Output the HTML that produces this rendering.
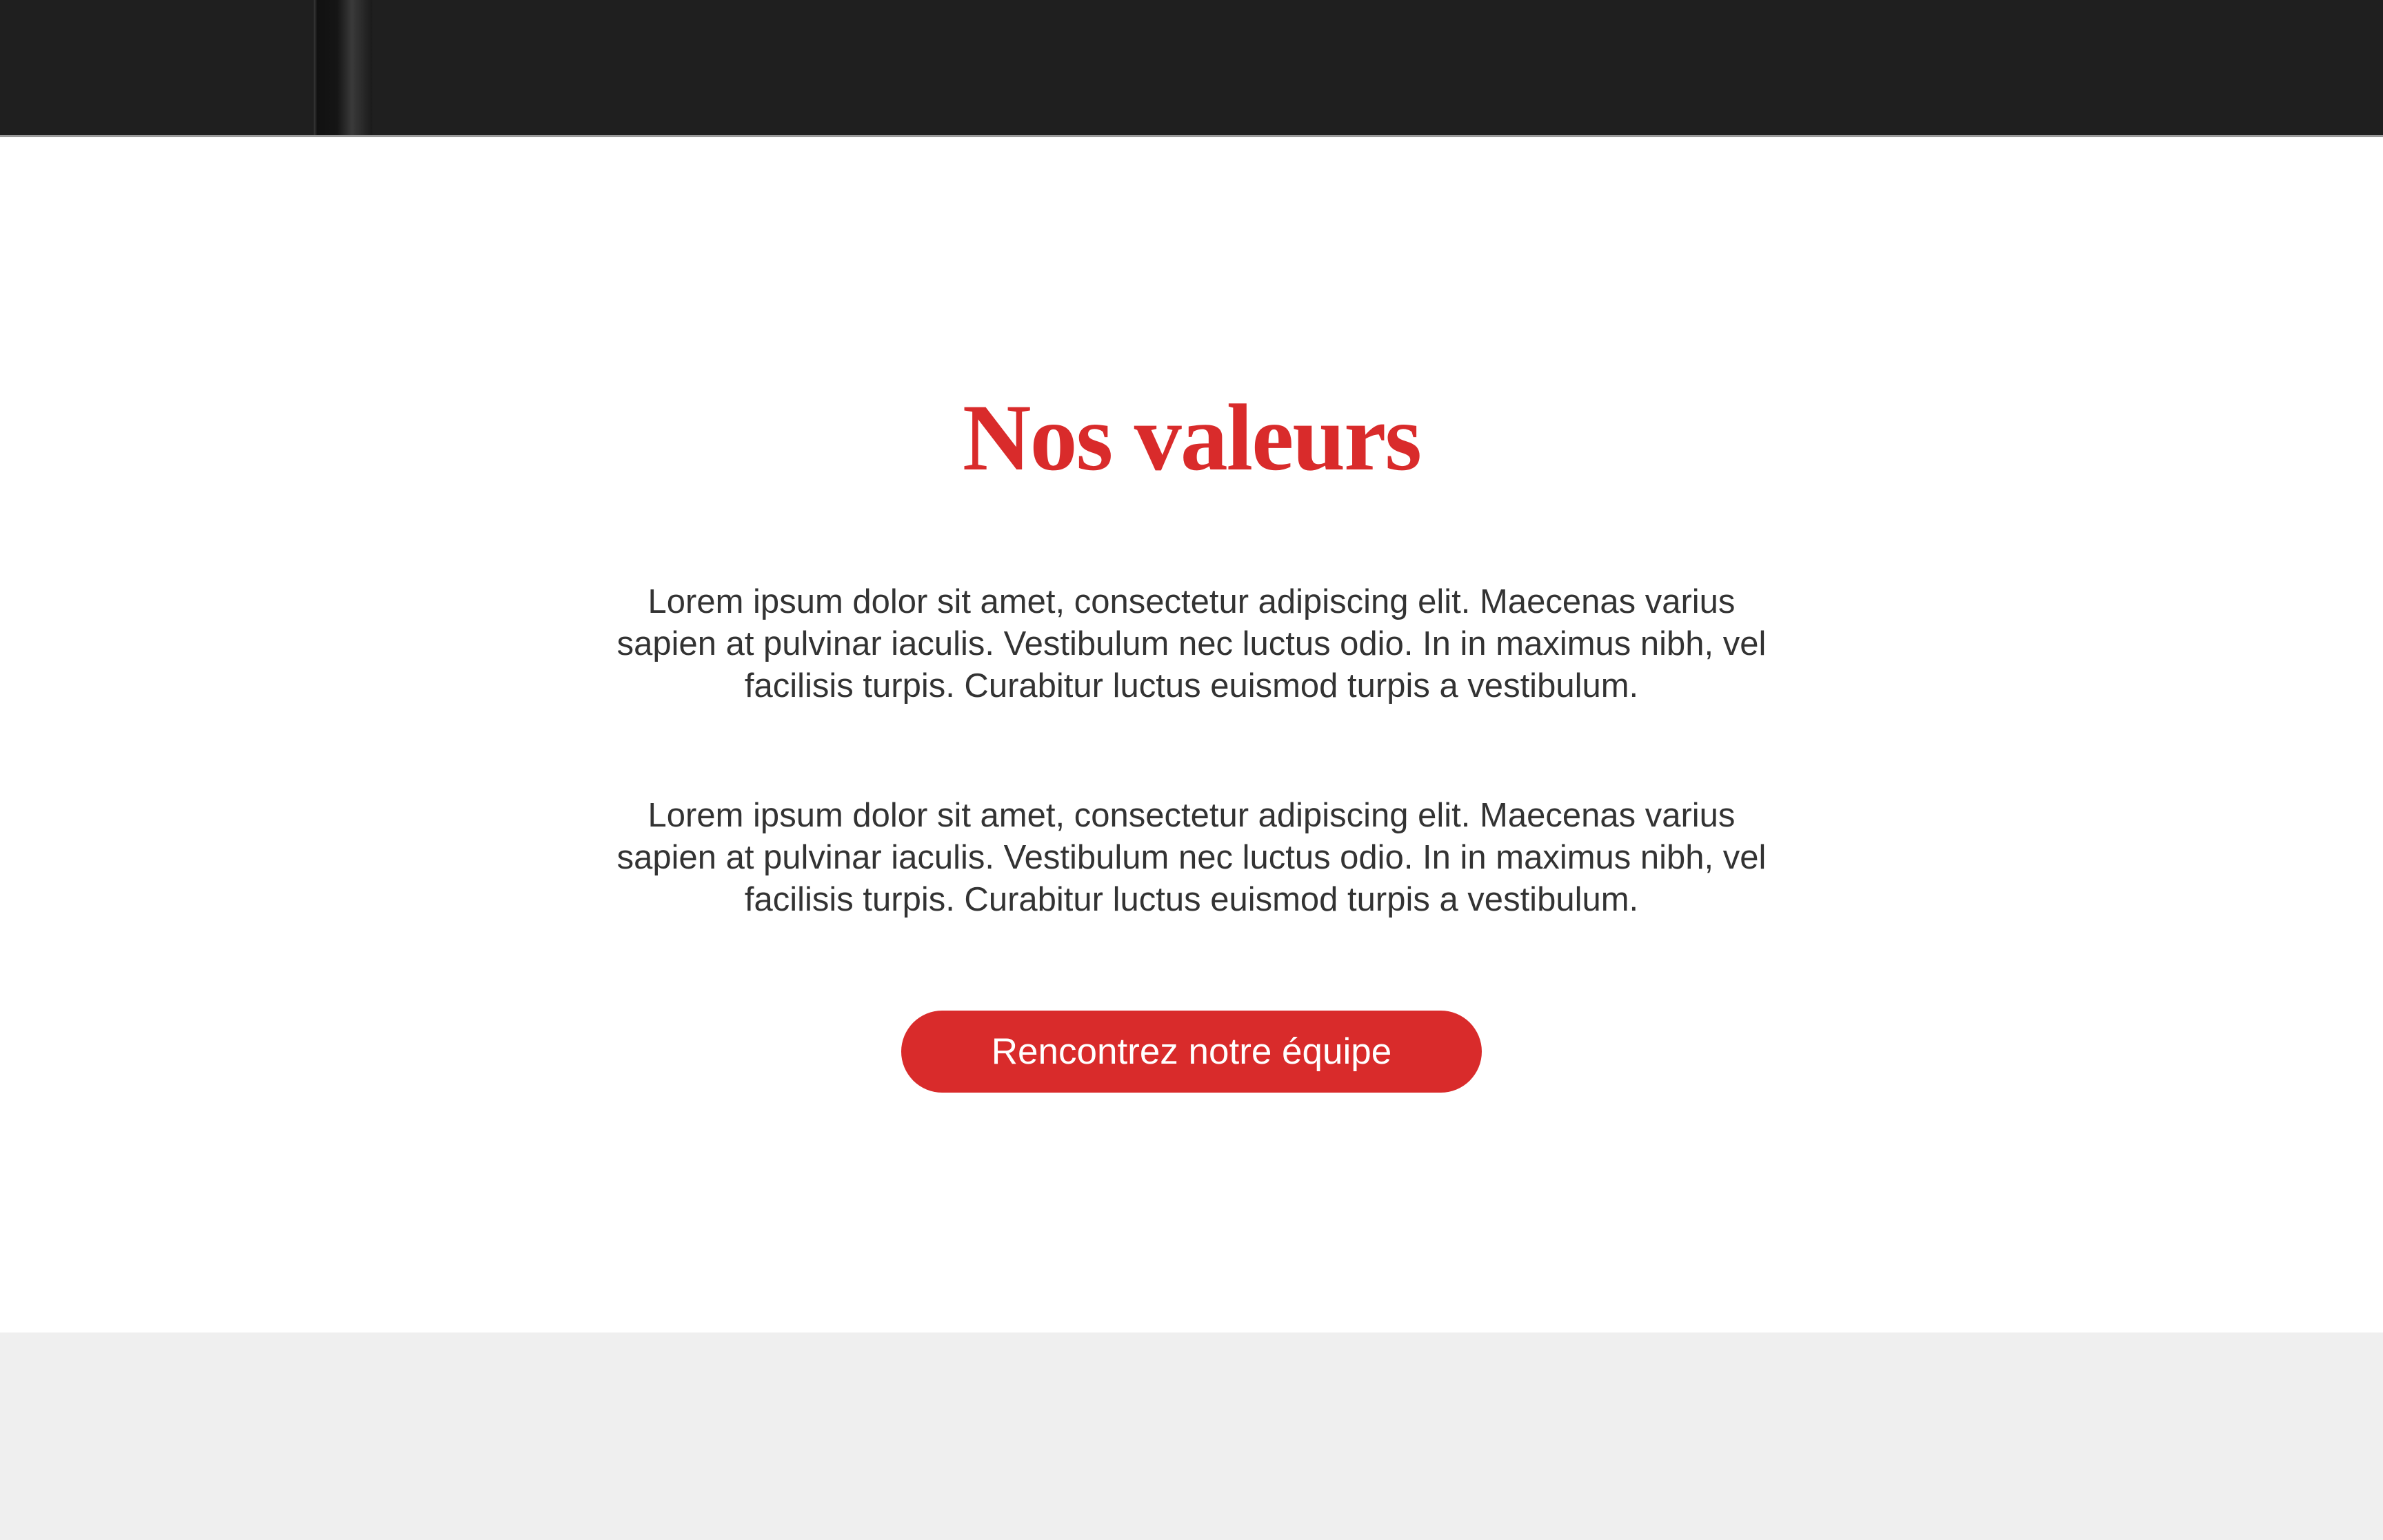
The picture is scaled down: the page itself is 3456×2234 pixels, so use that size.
<!DOCTYPE html>
<html><head><meta charset="utf-8"><style>
html,body{margin:0;padding:0;width:3456px;height:2234px;overflow:hidden;background:#fff;}
.top{position:absolute;left:0;top:0;width:3456px;height:198px;background:#1f1f1f;}
.strip{position:absolute;left:455px;top:0;width:85px;height:198px;background:linear-gradient(90deg,#3a3a3a 0,#111 6%,#151515 40%,#3a3a3a 65%,#1a1a1a 100%);}
.line{position:absolute;left:0;top:196px;width:3456px;height:3px;background:#999;}
h1{position:absolute;left:0;width:3456px;top:545px;margin:0;text-align:center;font:bold 138px/180px "Liberation Serif",serif;color:#d92b2b;letter-spacing:-2px;}
p{position:absolute;left:0;width:3456px;margin:0;text-align:center;font:49px/61px "Liberation Sans",sans-serif;color:#333;}
.btn{position:absolute;left:1307px;top:1466px;width:842px;height:119px;border-radius:60px;background:#d92b2b;color:#fff;text-align:center;font:53px/119px "Liberation Sans",sans-serif;}
.bottom{position:absolute;left:0;top:1933px;width:3456px;height:301px;background:#efefef;}
</style></head><body>
<div class="top"><div class="strip"></div></div>
<div class="line"></div>
<h1>Nos valeurs</h1>
<p style="top:843px">Lorem ipsum dolor sit amet, consectetur adipiscing elit. Maecenas varius<br>sapien at pulvinar iaculis. Vestibulum nec luctus odio. In in maximus nibh, vel<br>facilisis turpis. Curabitur luctus euismod turpis a vestibulum.</p>
<p style="top:1153px">Lorem ipsum dolor sit amet, consectetur adipiscing elit. Maecenas varius<br>sapien at pulvinar iaculis. Vestibulum nec luctus odio. In in maximus nibh, vel<br>facilisis turpis. Curabitur luctus euismod turpis a vestibulum.</p>
<div class="btn">Rencontrez notre équipe</div>
<div class="bottom"></div>
</body></html>
